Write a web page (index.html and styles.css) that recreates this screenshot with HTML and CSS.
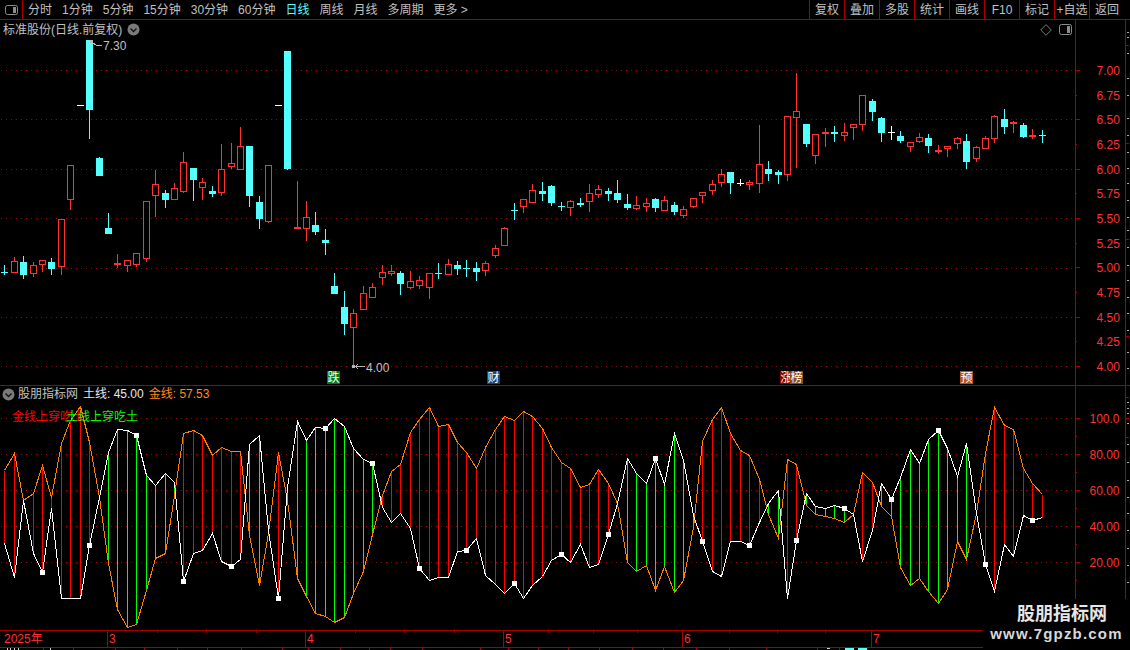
FILE: index.html
```html
<!DOCTYPE html>
<html lang="zh-CN">
<head>
<meta charset="utf-8">
<title>股朋指标网</title>
<link rel="stylesheet" href="styles.css">
</head>
<body>
<div class="app">
  <header class="toolbar">
    <div class="layout-cell">
      <svg class="panel-icon" width="13" height="10" viewBox="0 0 13 10"><rect x="0.5" y="0.5" width="12" height="9" rx="2" fill="none" stroke="#8c8c8c"/><rect x="8" y="2" width="3" height="6" fill="#8c8c8c"/></svg>
    </div>
    <nav class="periods">
      <span>分时</span><span>1分钟</span><span>5分钟</span><span>15分钟</span><span>30分钟</span><span>60分钟</span>
      <span class="active">日线</span><span>周线</span><span>月线</span><span>多周期</span><span>更多 &gt;</span>
    </nav>
    <div class="actions">
      <span>复权</span><span>叠加</span><span>多股</span><span>统计</span><span>画线</span><span>F10</span><span>标记</span><span>+自选</span><span>返回</span>
    </div>
  </header>

  <section class="panel price-panel">
    <div class="plot">
      <svg id="price-plot" class="chart" width="1075" height="365" viewBox="0 20 1075 365" shape-rendering="crispEdges"></svg>
      <div class="plot-head">
        <div class="title">标准股份(日线.前复权)
          <svg class="chevron" width="13" height="13" viewBox="0 0 13 13"><circle cx="6.5" cy="6.5" r="6" fill="#7a7a7a"/><path d="M3.5 5.5 6.5 8.5 9.5 5.5" fill="none" stroke="#111" stroke-width="1.3"/></svg>
        </div>
        <div class="tools">
          <svg width="12" height="12" viewBox="0 0 12 12"><path d="M6 .7 11.3 6 6 11.3 .7 6Z" fill="none" stroke="#7a7a7a"/></svg>
          <svg width="13" height="11" viewBox="0 0 13 11"><rect x="0.5" y="0.5" width="12" height="10" rx="2" fill="none" stroke="#8c8c8c"/><rect x="8" y="2" width="3" height="7" fill="#8c8c8c"/></svg>
        </div>
      </div>
      <span class="event ev-die">跌</span>
      <span class="event ev-cai">财</span>
      <span class="event ev-zhang">涨</span>
      <span class="event ev-bang">榜</span>
      <span class="event ev-yu">预</span>
    </div>
    <svg id="price-axis" class="axis" width="54" height="365" viewBox="1076 20 54 365" shape-rendering="crispEdges"></svg>
  </section>

  <section class="panel indicator-panel">
    <div class="plot">
      <svg id="ind-plot" class="chart" width="1075" height="244" viewBox="0 386 1075 244" shape-rendering="crispEdges"></svg>
      <div class="ind-head">
        <svg class="chevron" width="13" height="13" viewBox="0 0 13 13"><circle cx="6.5" cy="6.5" r="6" fill="#7a7a7a"/><path d="M3.5 5.5 6.5 8.5 9.5 5.5" fill="none" stroke="#111" stroke-width="1.3"/></svg>
        <span class="ind-name">股朋指标网</span>
        <span class="ind-white">土线: 45.00</span>
        <span class="ind-gold">金线: 57.53</span>
      </div>
      <span class="signal sig-red">金线上穿吃土</span>
      <span class="signal sig-green">土线上穿吃土</span>
    </div>
    <svg id="ind-axis" class="axis" width="54" height="244" viewBox="1076 386 54 244" shape-rendering="crispEdges"></svg>
  </section>

  <svg id="date-axis" class="dates" width="1130" height="20" viewBox="0 630 1130 20" shape-rendering="crispEdges"></svg>

  <aside class="watermark">
    <div class="wm-name">股朋指标网</div>
    <div class="wm-url">www.7gpzb.com</div>
  </aside>
</div>
<script src="chart.js"></script>
</body>
</html>
```

FILE: styles.css
```css
html, body {
  margin: 0;
  padding: 0;
  height: 100%;
  overflow: hidden;
  background: #000;
}

.app {
  position: relative;
  width: 1130px;
  height: 650px;
  overflow: hidden;
  display: flex;
  flex-direction: column;
  background: #000;
  color: #c0c0c0;
  font: 12px/1 "Liberation Sans", "Noto Sans CJK SC", sans-serif;
}

.toolbar {
  flex: none;
  height: 19px;
  display: flex;
  align-items: stretch;
  border-bottom: 1px solid #a80000;
}

.layout-cell {
  width: 23px;
  flex: none;
  box-sizing: border-box;
  border-right: 1px solid #a80000;
  display: flex;
  align-items: center;
  padding-left: 5px;
}

.periods {
  display: flex;
  align-items: center;
  gap: 10px;
  padding-left: 5px;
}

.periods .active { color: #54ffff; }

.actions {
  margin-left: auto;
  margin-right: 6px;
  display: flex;
}

.actions span {
  width: 35px;
  box-sizing: border-box;
  border-left: 1px solid #a80000;
  display: flex;
  align-items: center;
  justify-content: center;
}

.panel {
  flex: none;
  display: flex;
}

.price-panel {
  height: 365px;
  border-bottom: 1px solid #a80000;
}

.indicator-panel { height: 244px; }

.plot {
  position: relative;
  width: 1075px;
  flex: none;
}

.chart, .axis, .dates { display: block; flex: none; }

.plot-head {
  position: absolute;
  top: 0;
  left: 0;
  right: 3px;
  height: 19px;
  display: flex;
  align-items: center;
  justify-content: space-between;
  padding-left: 3px;
}

.title {
  display: flex;
  align-items: center;
  gap: 5px;
}

.tools {
  display: flex;
  align-items: center;
  gap: 7px;
}

.ind-head {
  position: absolute;
  top: 0;
  left: 2px;
  height: 16px;
  display: flex;
  align-items: center;
  gap: 5px;
}

.ind-head .chevron { margin-right: -2px; }

.ind-white { color: #e8e8e8; }
.ind-gold { color: #ff8c1a; }

.signal {
  position: absolute;
  top: 25px;
}

.sig-red { left: 12px; color: #ff0000; }
.sig-green { left: 66px; color: #00ff00; }

.event {
  position: absolute;
  top: 351px;
  width: 13px;
  height: 13px;
  display: flex;
  align-items: center;
  justify-content: center;
  color: #fff;
}

.ev-die { left: 327px; background: #007a12; }
.ev-cai { left: 487px; background: #15457e; }
.ev-zhang { left: 780px; background: #8c0000; }
.ev-bang { left: 790px; background: #8a4a12; }
.ev-yu { left: 960px; background: #b8500f; }

.watermark {
  position: absolute;
  right: 0;
  bottom: 0;
  width: 147px;
  height: 51px;
  background: #000;
  display: flex;
  flex-direction: column;
  align-items: center;
  padding-top: 6px;
  box-sizing: border-box;
  gap: 3px;
  font-weight: bold;
  color: #e6e6e6;
}

.wm-name {
  font-size: 18px;
  margin-left: 11px;
}

.wm-url {
  font-size: 15px;
  letter-spacing: 1.2px;
  color: #d8d8d8;
}
```

FILE: chart.js
```js
(function () {
  var RED = '#ff3232', CYAN = '#54ffff', DARK = '#a80000', GRID = '#a00000';
  var X = function (i) { return Math.round(4.3 + 9.43 * i) + 0.5; };

  // type, high, body top, body bottom, low (page pixel rows)
  var candles = [
    'c 265 272 272 275','r 257 261 273 273','c 256 262 275 279','r 262 265 274 277','r 260 260 265 272',
    'c 258 262 269 275','r 219 219 267 275','r 165 165 200 210','d 105','c 40 40 110 139',
    'c 157 158 176 176','c 213 228 234 234','r 254 263 264 268','r 260 260 266 272','r 253 253 265 267',
    'r 201 201 259 262','r 170 184 196 217','c 190 193 200 208','r 183 188 200 200','r 152 162 192 193',
    'c 168 168 180 201','r 178 182 188 200','c 186 191 194 197','r 144 169 193 196','r 143 163 167 169',
    'r 127 146 170 170','c 146 146 196 207','c 196 202 219 229','r 165 165 222 223','d 105',
    'c 51 51 169 170','r 181 227 228 228','r 201 217 229 241','c 212 225 232 235','c 229 240 243 255',
    'c 273 286 294 294','c 291 307 324 335','r 309 313 328 366','r 286 293 310 310','r 283 287 298 298',
    'r 265 272 278 285','r 265 271 274 276','c 271 273 284 295','r 271 281 288 289','r 276 280 286 289',
    'r 273 273 288 299','c 263 273 273 279','r 259 264 275 275','c 261 265 269 275','c 260 268 268 277',
    'c 262 268 272 281','r 261 263 271 276','r 245 248 256 258','r 227 228 246 246','c 203 210 210 220',
    'r 199 199 207 213','r 184 190 203 203','c 182 191 194 201','c 185 186 203 206','c 202 206 206 211',
    'r 200 201 208 216','c 198 203 205 207','r 184 193 202 212','r 185 189 195 198','c 188 191 194 201',
    'c 180 193 200 203','c 194 204 208 210','r 196 205 209 210','r 198 203 207 212','c 198 199 208 212',
    'r 196 200 211 211','c 202 205 212 215','r 206 209 216 218','r 198 198 207 208','r 192 192 196 203',
    'r 180 184 191 195','r 169 174 183 187','c 172 172 183 194','w 179 183 183 186','r 180 182 185 190',
    'r 125 164 184 193','c 161 169 174 181','c 170 172 175 184','r 116 116 175 181','r 73 111 118 168',
    'c 124 124 144 147','r 134 134 156 164','r 128 132 133 147','c 126 132 133 142','r 123 132 136 141',
    'r 124 124 128 140','r 95 95 125 131','c 99 101 112 121','c 117 118 133 142','w 126 132 132 140',
    'c 131 136 141 143','r 142 142 147 152','r 133 137 142 143','c 134 138 146 153','r 145 150 151 154',
    'r 146 146 149 157','r 137 138 144 149','c 134 141 162 169','r 146 147 159 162','r 136 138 149 149',
    'r 115 116 139 143','c 109 119 127 134','r 121 122 124 133','c 123 125 137 138','r 129 135 136 139',
    'c 130 135 135 143'
  ];

  // goldline / earthline in rows measured from y=400 at 3x
  var gold = [210,160,300,280,195,292,130,60,17,125,290,490,628,680,672,570,475,458,285,100,91,105,166,140,154,154,405,555,400,157,300,533,588,638,648,665,650,580,513,403,
    285,212,192,95,58,20,78,72,125,157,203,142,88,47,60,32,47,85,140,187,203,260,253,208,248,310,485,513,495,570,497,575,540,380,122,57,22,100,150,165,
    237,342,415,176,193,316,342,348,353,365,342,217,245,317,348,500,555,535,573,610,567,422,478,340,160,20,75,88,205,250,282];
  var earth = [430,532,300,458,516,325,595,595,595,435,290,155,88,90,104,225,255,220,245,543,458,450,400,483,497,478,132,106,390,593,260,62,120,80,83,55,78,145,178,188,
    322,367,340,385,503,540,532,532,452,450,415,525,553,580,549,595,555,527,480,462,487,432,500,492,402,310,175,220,248,175,253,100,180,345,423,513,527,424,424,435,
    365,310,270,595,420,278,318,323,316,323,342,482,390,250,298,230,148,190,117,90,145,228,128,340,492,572,432,468,344,359,352];

  function line(x1, y1, x2, y2, c) {
    return '<line x1="' + x1 + '" y1="' + y1 + '" x2="' + x2 + '" y2="' + y2 + '" stroke="' + c + '"/>';
  }
  function rect(x, y, w, h, c) {
    return '<rect x="' + x + '" y="' + y + '" width="' + w + '" height="' + h + '" fill="' + c + '"/>';
  }
  function grid(ys) {
    return ys.map(function (y) {
      return '<line x1="1" y1="' + y + '" x2="1075" y2="' + y + '" stroke="' + GRID + '" stroke-dasharray="1 4"/>';
    }).join('');
  }
  function label(x, y, t, c) {
    return '<text x="' + x + '" y="' + y + '" fill="' + c + '" class="lbl" font-family="Liberation Sans, Noto Sans CJK SC, sans-serif" font-size="12" shape-rendering="auto">' + t + '</text>';
  }

  /* ---------- price panel ---------- */
  var gridYs = [70.5, 119.5, 169.5, 218.5, 268.5, 317.5, 366.5];
  var s = grid(gridYs);
  candles.forEach(function (str, i) {
    var p = str.split(' '), t = p[0], x = X(i);
    if (t === 'd') { s += rect(x - 3.5, +p[1], 7, 1, '#ffffff'); return; }
    var hi = +p[1], top = +p[2], bot = +p[3], lo = +p[4];
    var c = t === 'r' ? RED : t === 'c' ? CYAN : '#ffffff';
    var h = bot - top;
    if (hi < top) s += line(x, hi, x, top, c);
    if (lo > bot) s += line(x, bot, x, lo, c);
    if (h <= 1) {
      s += rect(x - 3.5, top, 7, h + 1, c);
    } else if (t === 'r') {
      s += '<rect x="' + (x - 3) + '" y="' + (top + 0.5) + '" width="6" height="' + (h - 1 + 0.01) + '" fill="#000" stroke="' + c + '"/>';
    } else {
      s += rect(x - 3.5, top, 7, h, c);
    }
  });
  // high / low price annotations
  s += rect(90, 40, 3, 3, '#b8b8b8');
  s += line(93, 43, 97, 45.5, '#b8b8b8') + line(97, 45.5, 102, 45.5, '#b8b8b8');
  s += label(103, 50, '7.30', '#c0c0c0');
  s += rect(352, 365, 3, 3, '#b8b8b8');
  s += line(355, 366.5, 365, 366.5, '#b8b8b8') + line(355, 366.5, 358, 364.5, '#b8b8b8') + line(355, 366.5, 358, 368.5, '#b8b8b8');
  s += label(366, 372, '4.00', '#c0c0c0');
  document.getElementById('price-plot').innerHTML = s;

  /* ---------- right axes ---------- */
  var sideLong = [45, 143, 239, 336];
  var sideSmallTop = [32,37,53,78,95,118,135,152,168,183,200,217,230,247,265,280,297,313,330,352,368];
  function sideScale(yMin, yMax, longs, smalls) {
    var out = line(1126.5, yMin, 1126.5, yMax, DARK);
    longs.forEach(function (y) { out += rect(1127, y, 3, 1, DARK); });
    smalls.forEach(function (y) { out += rect(1128, y, 2, 1, '#b0b0b0'); });
    return out;
  }
  var a = line(1076, 20, 1076, 385, DARK);
  ['7.00','6.75','6.50','6.25','6.00','5.75','5.50','5.25','5.00','4.75','4.50','4.25','4.00'].forEach(function (t, i) {
    var y = Math.floor(70.5 + i * 24.67);
    a += rect(1076, y, i % 2 ? 2 : 5, 1, DARK);
    a += label(1097.5, y + 5, t, RED);
  });
  a += sideScale(20, 385, sideLong, sideSmallTop);
  document.getElementById('price-axis').innerHTML = a;

  var b = rect(1075, 386, 2, 244, DARK);
  ['100.0','80.00','60.00','40.00','20.00'].forEach(function (t, i) {
    var y = 418 + i * 36;
    b += rect(1076, y, 5, 1, DARK);
    b += rect(1076, y + 18, 2, 1, DARK);
    b += label(1090.5, y + 5, t, RED);
  });
  b += sideScale(386, 600, [397, 418, 437], [402,408,413,423,444,462,480,497,513,530,548,565,582]);
  document.getElementById('ind-axis').innerHTML = b;

  /* ---------- indicator panel ---------- */
  var Y = function (v) { return Math.round(400 + v / 3) + 0.5; };
  var n = '';
  n += grid([418.5, 454.5, 490.5, 526.5, 562.5]);
  var goldPts = [], earthPts = [], bars = '', boxes = '';
  gold.forEach(function (g, i) {
    var x = X(i), y1 = Y(g), y2 = Y(earth[i]);
    goldPts.push(x + ',' + y1);
    earthPts.push(x + ',' + y2);
    if (y1 !== y2) bars += line(x, y1, x, y2, g < earth[i] ? '#ff0000' : '#00ff00');
    if (i % 5 === 4) boxes += rect(x - 2.5, y2 - 2.5, 5, 5, '#ffffff');
  });
  n += bars;
  n += '<polyline fill="none" stroke="#ff8000" points="' + goldPts.join(' ') + '"/>';
  n += '<polyline fill="none" stroke="#ffffff" points="' + earthPts.join(' ') + '"/>';
  n += boxes;
  document.getElementById('ind-plot').innerHTML = n;

  /* ---------- date axis ---------- */
  var d = rect(0, 630, 1075, 1, DARK) + rect(0, 647, 1075, 1, DARK);
  var months = [[107, '3'], [305, '4'], [503, '5'], [682, '6'], [871, '7']];
  months.forEach(function (m) {
    d += rect(m[0], 630, 1, 18, DARK);
    d += label(m[0] + 2, 643, m[1], RED);
  });
  d += label(4, 643, '2025年', RED);
  [157, 206, 256, 355, 404, 454, 548, 593, 637, 729, 777, 825].forEach(function (x) {
    d += rect(x, 631, 1, 2, DARK);
  });
  [43, 73, 115, 144, 177, 207, 241, 282, 308, 340, 369, 390, 422, 480, 508, 538, 568, 599, 632, 663, 696, 729, 766, 817, 839].forEach(function (x) {
    d += rect(x, 648, 1, 2, DARK);
  });
  // tops of the cropped status row
  [7, 10, 14, 18, 50].forEach(function (x) { d += rect(x, 648, 1, 2, '#d0d0d0'); });
  d += rect(827, 648, 3, 1, '#d0d0d0');
  d += rect(845, 648, 9, 2, CYAN) + rect(858, 648, 9, 2, CYAN);
  document.getElementById('date-axis').innerHTML = d;
})();
```
